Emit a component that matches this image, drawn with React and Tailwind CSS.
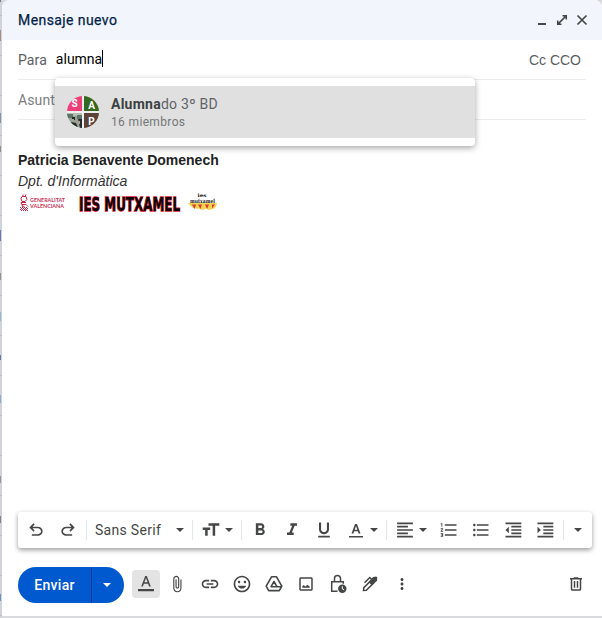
import React from 'react';

const paths = {
  undo: 'M7 19v-2h7.1q1.575 0 2.738-1T18 13.500t-1.162-2.5T14.100 10H7.800l2.600 2.600L9 14 4 9l5-5 1.400 1.400L7.800 8h6.300q2.425 0 4.163 1.575T20 13.500t-1.737 3.925T14.100 19Z',
  bold: 'M15.600 10.790c.97-.67 1.650-1.770 1.650-2.790 0-2.260-1.750-4-4-4H7v14h7.040c2.090 0 3.710-1.700 3.710-3.790 0-1.520-.86-2.820-2.150-3.420zM10 6.500h3c.83 0 1.500.67 1.500 1.500s-.67 1.500-1.500 1.500h-3v-3zm3.500 9H10v-3h3.500c.83 0 1.500.67 1.500 1.500s-.67 1.500-1.500 1.500z',
  italic: 'M10 4v3h2.210l-3.420 8H6v3h8v-3h-2.210l3.420-8H18V4z',
  underline: 'M12 17c3.310 0 6-2.690 6-6V3h-2.500v8c0 1.930-1.570 3.500-3.500 3.500S8.500 12.930 8.500 11V3H6v8c0 3.310 2.690 6 6 6zm-7 2v2h14v-2H5z',
  size: 'M9 4v3h5v12h3V7h5V4H9zM2 12h3v7h3v-7h3V9H2v3z',
  align: 'M2.500 3h19v2h-19zM2.500 7h13v2h-13zM2.500 11h19v2h-19zM2.500 15h13v2h-13zM2.500 19h19v2h-19z',
  numbered: 'M2 17h2v.5H3v1h1v.5H2v1h3v-4H2v1zm1-9h1V4H2v1h1v3zm-1 3h1.800L2 13.100v.9h3v-1H3.200L5 10.900V10H2v1zm5-6v2h14V5H7zm0 14h14v-2H7v2zm0-6h14v-2H7v2z',
  bullets: 'M4 10.500c-.83 0-1.500.67-1.500 1.500s.67 1.500 1.500 1.500 1.500-.67 1.500-1.500-.67-1.500-1.500-1.500zm0-6c-.83 0-1.500.67-1.500 1.500S3.170 7.500 4 7.500 5.500 6.830 5.500 6 4.830 4.500 4 4.500zm0 12c-.83 0-1.500.68-1.500 1.500s.68 1.500 1.500 1.500 1.500-.68 1.500-1.500-.67-1.500-1.500-1.500zM7 19h14v-2H7v2zm0-6h14v-2H7v2zm0-8v2h14V5H7z',
  outdent: 'M10 17h12v-2H10v2zM3 12l4 4V8l-4 4zm0 9h19v-2H3v2zM3 3v2h19V3H3zm7 6h12V7H10v2zm0 4h12v-2H10v2z',
  indent: 'M3 21h19v-2H3v2zM3 8v8l4-4-4-4zm7 9h12v-2H10v2zM3 3v2h19V3H3zm7 6h12V7H10v2zm0 4h12v-2H10v2z',
  clip: 'M16.500 6v11.500c0 2.210-1.790 4-4 4s-4-1.790-4-4V5a2.500 2.500 0 0 1 5 0v10.500c0 .55-.45 1-1 1s-1-.45-1-1V6H10v9.500a2.500 2.500 0 0 0 5 0V5c0-2.210-1.790-4-4-4S7 2.790 7 5v12.500c0 3.040 2.460 5.500 5.500 5.500s5.500-2.460 5.500-5.500V6h-1.500z',
  link: 'M3.900 12c0-1.710 1.390-3.100 3.100-3.100h4V7H7c-2.760 0-5 2.240-5 5s2.240 5 5 5h4v-1.900H7c-1.710 0-3.100-1.390-3.100-3.100zM8 13h8v-2H8v2zm9-6h-4v1.900h4c1.710 0 3.100 1.390 3.100 3.100s-1.390 3.100-3.100 3.100h-4V17h4c2.760 0 5-2.240 5-5s-2.240-5-5-5z',
  emoji: 'M11.990 2C6.470 2 2 6.480 2 12s4.470 10 9.990 10C17.520 22 22 17.520 22 12S17.520 2 11.990 2zM12 20c-4.420 0-8-3.580-8-8s3.580-8 8-8 8 3.580 8 8-3.580 8-8 8zm3.500-9c.83 0 1.500-.67 1.500-1.500S16.330 8 15.500 8 14 8.670 14 9.500s.67 1.500 1.500 1.500zm-7 0c.83 0 1.500-.67 1.500-1.500S9.330 8 8.500 8 7 8.670 7 9.500 7.670 11 8.500 11zm3.500 6.500c2.330 0 4.310-1.460 5.110-3.500H6.890c.8 2.040 2.780 3.500 5.110 3.500z',
  image: 'M19 5v14H5V5h14m0-2H5c-1.100 0-2 .9-2 2v14c0 1.100.9 2 2 2h14c1.100 0 2-.9 2-2V5c0-1.100-.9-2-2-2zM17 17H7v-2l2-1.800 2 2 3-2.200 3 2.500z',
  more: 'M12 8c1.100 0 2-.9 2-2s-.9-2-2-2-2 .9-2 2 .9 2 2 2zm0 2c-1.100 0-2 .9-2 2s.9 2 2 2 2-.9 2-2-.9-2-2-2zm0 6c-1.100 0-2 .9-2 2s.9 2 2 2 2-.9 2-2-.9-2-2-2z',
  trash: 'M15 4V3H9v1H4v2h1v13c0 1.100.9 2 2 2h10c1.100 0 2-.9 2-2V6h1V4h-5zm2 15H7V6h10v13zM9 8h2v9H9zm4 0h2v9h-2z',
};

function Icon({ name, className = 'size-5' }) {
  return (
    <svg viewBox="0 0 24 24" fill="currentColor" className={`shrink-0 ${className}`}>
      <path d={paths[name]} />
    </svg>
  );
}

function Cell({ className = 'w-8', children }) {
  return <span className={`flex shrink-0 items-center justify-center ${className}`}>{children}</span>;
}

function Caret() {
  return (
    <svg viewBox="0 0 8 4" fill="currentColor" className="h-1 w-2 shrink-0">
      <path d="M0 0h8L4 4z" />
    </svg>
  );
}

function Divider() {
  return <span className="h-5 w-px shrink-0 bg-[#e3e6eb]" />;
}

function BackgroundEdge() {
  const marks = [
    ['h-[2px] mt-0', 'bg-[#777b87]'], ['h-[11px] mt-7', 'bg-[#a98a80]'],
    ['h-[10px] mt-[72px]', 'bg-[#8492a8]'], ['h-[6px] mt-[23px]', 'bg-[#9b8c85]'],
    ['h-[11px] mt-[78px]', 'bg-[#6878b6]'], ['h-[7px] mt-[32px]', 'bg-[#9a8f8c]'],
    ['h-[9px] mt-[32px]', 'bg-[#93b9db]'], ['h-[5px] mt-[34px]', 'bg-[#6475b7]'],
    ['h-[8px] mt-[35px]', 'bg-[#8cadd8]'], ['h-[7px] mt-[73px]', 'bg-[#98909c]'],
    ['h-[7px] mt-[33px]', 'bg-[#887e8a]'], ['h-[7px] mt-[71px]', 'bg-[#6b8fc8]'],
  ];
  return (
    <div className="w-[2px] shrink-0 overflow-hidden bg-[repeating-linear-gradient(#d0d4da_0_15px,#babec4_15px_16px,#d0d4da_16px_40px)]">
      {marks.map(([size, color], i) => <div key={i} className={`w-px ${size} ${color}`} />)}
    </div>
  );
}

function Header() {
  return (
    <header className="flex h-10 shrink-0 items-center rounded-t-lg bg-[#f2f6fc] pl-4 pr-[10px]">
      <span className="text-sm tracking-[0.42px] text-[#041e49] [-webkit-text-stroke:0.25px_#041e49]">Mensaje nuevo</span>
      <div className="ml-auto flex items-center text-[#444746]">
        <Cell className="w-5"><span className="mt-[8px] h-[2px] w-2 bg-current" /></Cell>
        <Cell className="w-5">
          <svg viewBox="0 0 12 12" fill="none" stroke="currentColor" strokeWidth="1.500" className="size-3">
            <path d="M6.500 1.700h3.800v3.800M5.500 10.300H1.700V6.500M1.900 10.100l8.200-8.200" />
          </svg>
        </Cell>
        <Cell className="w-5">
          <svg viewBox="0 0 12 12" fill="none" stroke="currentColor" strokeWidth="1.700" className="size-3">
            <path d="m1.500 1.500 9 9m0-9-9 9" />
          </svg>
        </Cell>
      </div>
    </header>
  );
}

function GroupAvatar() {
  return (
    <div className="grid size-8 shrink-0 grid-cols-[15px_15px] grid-rows-[15px_15px] gap-[2px] overflow-hidden rounded-full bg-[#f0f0f0] text-[10px] font-bold leading-none text-white">
      <span className="flex items-center justify-center bg-[#ec407a]">S</span>
      <span className="flex items-center justify-center bg-[#33691e] pt-1">A</span>
      <svg viewBox="0 0 15 15" className="size-[15px]">
        <path fill="#93a397" d="M0 0h15v15H0z" />
        <path fill="#b3bfae" d="M0 0h15v3H0z" />
        <path fill="#5f7268" d="M0 1h6v4H0zM10 2h5v4h-5z" />
        <path fill="#252a29" d="M5 4h3v3H5zM4 9l5 1 2 5H5zM11 6h4v9h-2z" />
        <path fill="#b79d8d" d="M5 6h2v2H5zM11 8h2v3h-2z" />
        <path fill="#d8dfdd" d="M1 9h2l3 3H3z" />
      </svg>
      <span className="flex items-center justify-center bg-[#5d4037] pt-[3px]">P</span>
    </div>
  );
}

function Suggestion() {
  return (
    <div className="absolute left-[53px] top-[78px] z-10 w-[420px] rounded bg-white py-2 shadow-[0_2px_6px_rgba(0,0,0,0.35)]">
      <div className="flex h-[52px] items-center bg-[#e0e0e0] pl-3">
        <GroupAvatar />
        <div className="ml-3 pt-px">
          <div className="text-sm leading-[18px] tracking-[0.25px] text-[#5f6368]"><b className="text-[#3c4043]">Alumna</b>do 3º BD</div>
          <div className="text-xs leading-[18px] tracking-[0.35px] text-[#747779]">16 miembros</div>
        </div>
      </div>
    </div>
  );
}

function Signature() {
  return (
    <div className="pl-4 pt-[30px] font-['Liberation_Sans',Arial,sans-serif]">
      <div className="text-[14px] font-bold leading-[21px] text-[#222]">Patricia Benavente Domenech</div>
      <div className="text-[14px] italic leading-[21px] text-[#333]">Dpt. d'Informàtica</div>
      <svg viewBox="0 0 200 24" className="block h-6 w-[200px] overflow-visible">
        <g transform="translate(0 1.500)">
          <g fill="none" stroke="#c9264b" strokeWidth="1">
            <path d="M4 3h4l1 3-2 2H4L3 5zM5 1v2m3-2-1 2M3 9h5M4 11h4l2 2M3 9l2 5M5 12l4 5" />
            <path strokeDasharray="1 1" d="M2 14h7M3 15h7M2 16h7M3 17h7" />
          </g>
          <g fill="#c83354" fontSize="5.800" fontFamily="Lato, sans-serif" fontWeight="700">
            <text x="12" y="8.500" textLength="35" lengthAdjust="spacingAndGlyphs">GENERALITAT</text>
            <text x="12" y="14" textLength="34" lengthAdjust="spacingAndGlyphs">VALENCIANA</text>
          </g>
          <text x="61" y="17" textLength="101" fill="#100" stroke="#d81430" strokeWidth="1.300" paintOrder="stroke" fontFamily="'DejaVu Sans Condensed', 'DejaVu Sans', sans-serif" fontWeight="700" fontSize="19" lengthAdjust="spacingAndGlyphs">IES MUTXAMEL</text>
          <path fill="#f4d350" d="M170 9.500h29q-1 6-5 6-3 2-6-.5-4 2.500-7 0-7 1-11-5.500z" />
          <path fill="#d93b35" d="m174 11 2.500 4.500L178 11zm6 0 2.500 4.500L184 11zm7 0 2 4.500 2-4.500zm7 0v4l3-4z" />
          <g fill="#111" fontFamily="'DejaVu Serif', serif" fontWeight="700">
            <text x="179.500" y="3" fontSize="4.800" textLength="9" lengthAdjust="spacingAndGlyphs">ies</text>
            <text x="172" y="9" fontSize="5.500" textLength="25" lengthAdjust="spacingAndGlyphs">mutxamel</text>
          </g>
        </g>
      </svg>
    </div>
  );
}

function Toolbar() {
  return (
    <div className="ml-4 flex h-9 w-[574px] shrink-0 items-center rounded-[3px] bg-white text-[#444746] shadow-[0_2px_5px_rgba(0,0,0,0.4)]">
      <Cell className="ml-[2px] w-8"><Icon name="undo" className="size-5" /></Cell>
      <Cell><Icon name="undo" className="size-5 -scale-x-100" /></Cell>
      <span className="ml-[2px] flex"><Divider /></span>
      <span className="ml-2 w-[68px] whitespace-nowrap text-sm tracking-[0.3px]">Sans Serif</span>
      <Cell className="ml-[8px] w-[18px]"><Caret /></Cell>
      <span className="ml-[3px] flex"><Divider /></span>
      <Cell className="ml-[8px] w-5"><Icon name="size" /></Cell>
      <Cell className="w-4"><Caret /></Cell>
      <span className="ml-[4px] flex"><Divider /></span>
      <Cell className="ml-[2px] w-8"><Icon name="bold" /></Cell>
      <Cell><Icon name="italic" /></Cell>
      <Cell><Icon name="underline" /></Cell>
      <Cell className="w-8">
        <svg viewBox="0 0 16 18" fill="currentColor" className="h-[18px] w-4">
          <path d="M7 3 3.500 12.500h1.900l.8-2.300h3.600l.8 2.300h1.900L9 3zm-.3 5.800L8 5l1.300 3.800zM1 15h14v1.600H1z" />
        </svg>
      </Cell>
      <Cell className="w-1"><Caret /></Cell>
      <span className="ml-[10px] flex"><Divider /></span>
      <Cell className="ml-2 w-5"><Icon name="align" /></Cell>
      <Cell className="w-4"><Caret /></Cell>
      <Cell className="ml-[2px] w-8"><Icon name="numbered" /></Cell>
      <Cell><Icon name="bullets" /></Cell>
      <Cell><Icon name="outdent" /></Cell>
      <Cell><Icon name="indent" /></Cell>
      <span className="ml-[2px] flex"><Divider /></span>
      <Cell className="w-7"><Caret /></Cell>
    </div>
  );
}

function DriveIcon() {
  return (
    <svg viewBox="0 0 20 20" fill="none" stroke="currentColor" strokeWidth="1.600" strokeLinejoin="round" className="size-5">
      <path d="M7.500 2.800h5l5.300 9.300-2.500 4.500H4.700l-2.500-4.500zM10 7.500l-2.900 5.200h5.800zM12.900 12.700h4.600" />
    </svg>
  );
}

function LockIcon() {
  return (
    <svg viewBox="0 0 20 20" fill="none" stroke="currentColor" strokeWidth="1.500" className="size-5">
      <path d="M9.500 17.300H3.700V7.800h11.600v2M6.500 7.800V4.500a3 3 0 0 1 6 0v3.300" />
      <circle cx="14.300" cy="14.700" r="4.200" fill="currentColor" stroke="none" />
      <path stroke="white" strokeWidth="1" d="M14.300 12.200v2.700l1.800 1" />
    </svg>
  );
}

function PenIcon() {
  return (
    <svg viewBox="0 0 20 20" fill="none" stroke="currentColor" strokeWidth="1.500" className="size-5">
      <path d="m3.500 16.500.3-2.800 7-7 2.500 2.500-7 7zM4.500 8.800l5.300-5.300 1.700 1.700" />
      <path fill="currentColor" d="m9.500 8 4-4.300 2.500-.4.500.5-.2 2.500-4.300 4.200z" />
    </svg>
  );
}

function ActionBar() {
  return (
    <div className="flex h-9 shrink-0 items-center pl-4 text-[#444746]">
      <div className="flex h-9 w-[106px] overflow-hidden rounded-full bg-[#0059cf] text-white">
        <span className="flex w-[73px] items-center justify-center text-sm font-medium tracking-[0.3px]">Enviar</span>
        <span className="w-px bg-[#063b91]" />
        <span className="flex w-8 items-center justify-center pr-[2px]"><Caret /></span>
      </div>
      <span className="ml-2 mb-[2px] flex size-7 items-center justify-center rounded bg-[#e3e3e3]">
        <svg viewBox="0 0 20 20" fill="currentColor" className="size-5">
          <path d="m9.200 2-4 10.500h1.700l1-2.800h4.200l1 2.800h1.700L10.800 2zm-.8 6.300L10 3.900l1.600 4.400zM2 15h16v2.300H2z" />
        </svg>
      </span>
      <Cell className="ml-[1px] mr-px w-8 pb-[2px]"><Icon name="clip" className="size-[18px]" /></Cell>
      <Cell className="w-8 pb-[2px]"><Icon name="link" /></Cell>
      <Cell className="w-8 pb-[2px]"><Icon name="emoji" /></Cell>
      <Cell className="w-8 pb-[2px]"><DriveIcon /></Cell>
      <Cell className="w-8 pb-[2px]"><Icon name="image" className="size-[18px]" /></Cell>
      <Cell className="w-8 pb-[2px]"><LockIcon /></Cell>
      <Cell className="w-8 pb-[2px]"><PenIcon /></Cell>
      <Cell className="w-8 pb-[2px]"><Icon name="more" className="size-[18px]" /></Cell>
      <Cell className="ml-auto mr-[10px] w-8 pb-[2px]"><Icon name="trash" className="size-[18px]" /></Cell>
    </div>
  );
}

export default function App() {
  return (
    <div className="flex h-[618px] w-[602px] overflow-hidden bg-[#d8dade] font-[Roboto,sans-serif]">
      <BackgroundEdge />
      <main className="relative flex h-[616px] w-[600px] flex-col rounded-t-lg bg-white">
        <Header />
        <div className="ml-4 mr-4 flex h-10 shrink-0 items-center border-b border-[#ebebeb] text-sm text-[#5b5e60]">
          <span className="tracking-[0.1px]">Para</span>
          <span className="ml-[9px] mb-[2px] flex items-center text-black">alumna<span className="h-[17px] w-px bg-black" /></span>
          <span className="ml-auto mr-[5px] font-['Liberation_Sans',Arial,sans-serif]">Cc CCO</span>
        </div>
        <div className="ml-4 mr-4 flex h-10 shrink-0 items-center border-b border-[#ebebeb] text-sm tracking-[0.1px] text-[#7c7f81]">Asunto</div>
        <Suggestion />
        <Signature />
        <div className="grow" />
        <Toolbar />
        <div className="h-[19px] shrink-0" />
        <ActionBar />
        <div className="h-[13px] shrink-0" />
      </main>
    </div>
  );
}
